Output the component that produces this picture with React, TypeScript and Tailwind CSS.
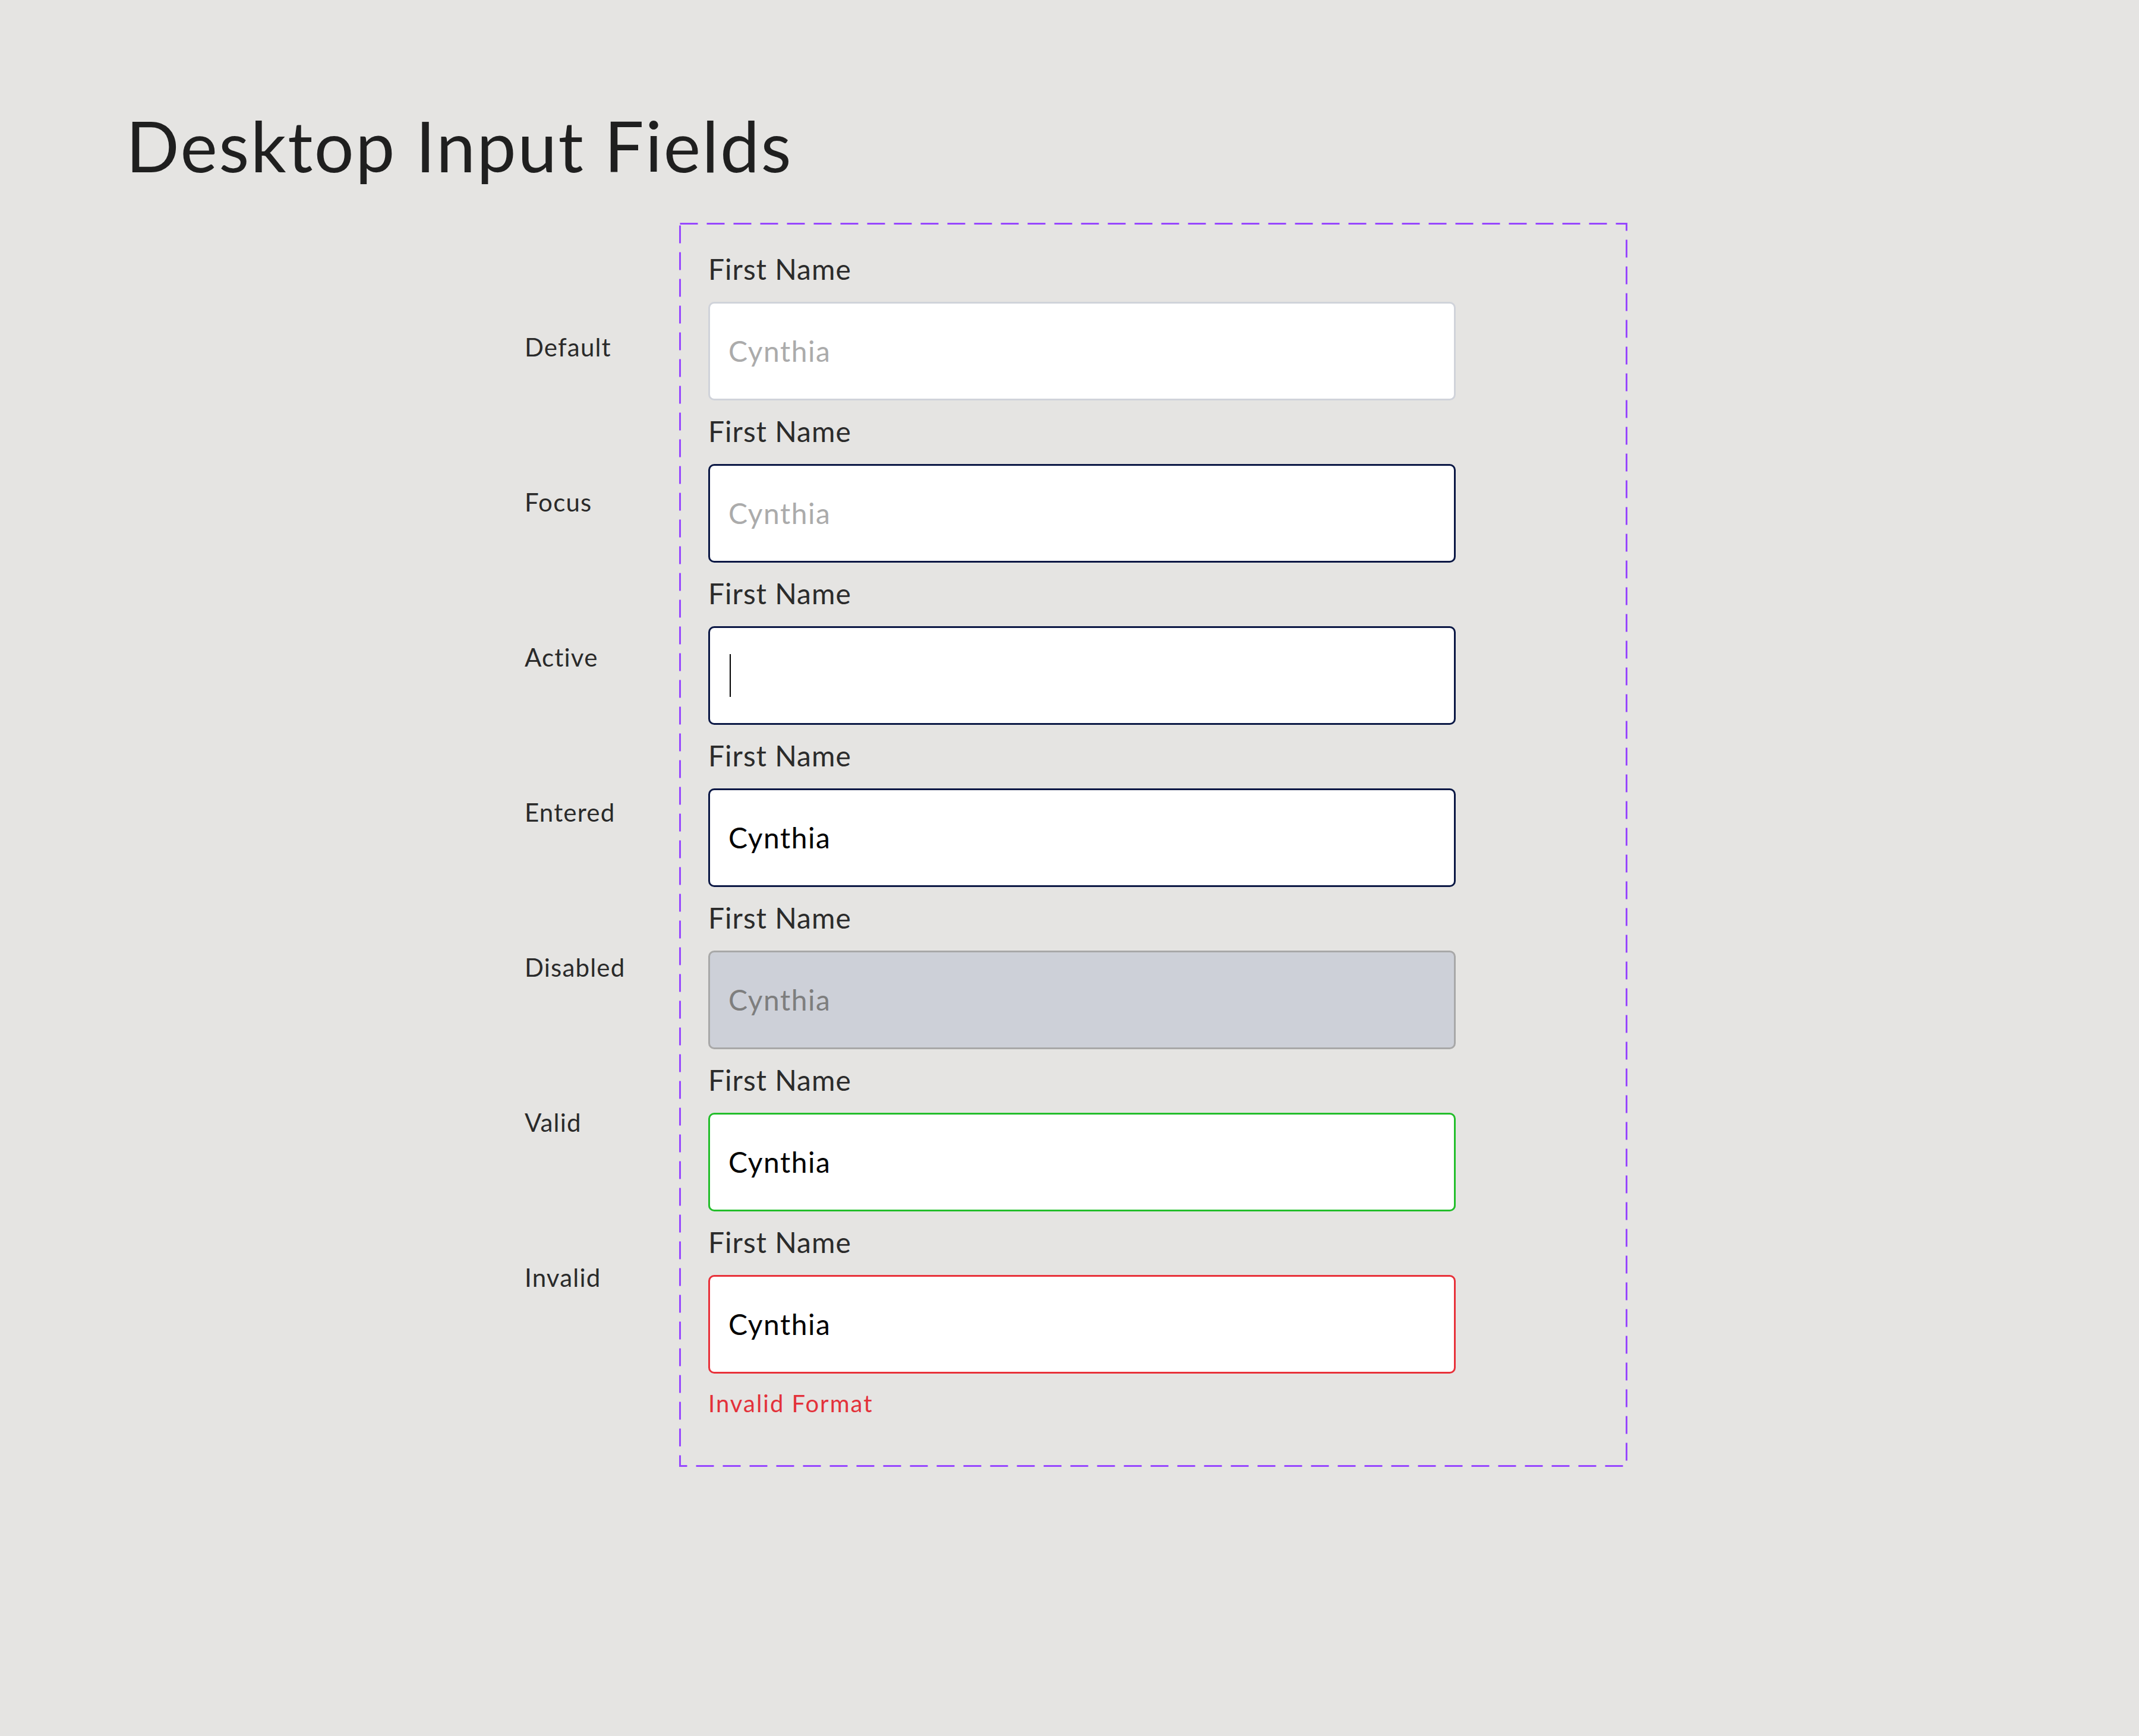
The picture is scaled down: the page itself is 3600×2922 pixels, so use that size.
type FieldState = "default" | "focus" | "active" | "entered" | "disabled" | "valid" | "invalid";

const sideLabels = ["Default", "Focus", "Active", "Entered", "Disabled", "Valid", "Invalid"];

const fields: FieldState[] = ["default", "focus", "active", "entered", "disabled", "valid", "invalid"];

const boxStyles: Record<FieldState, string> = {
  default: "bg-white border-[#D0D3DA]",
  focus: "bg-white border-[#0B1845]",
  active: "bg-white border-[#0B1845]",
  entered: "bg-white border-[#0B1845]",
  disabled: "bg-[#CDD0D8] border-[#A8A8A8]",
  valid: "bg-white border-[#23BE2B]",
  invalid: "bg-white border-[#E8313A]",
};

function InputField({ state }: { state: FieldState }) {
  let content: React.ReactNode = null;
  if (state === "default" || state === "focus") {
    content = <span className="text-[#ABABAB]">Cynthia</span>;
  } else if (state === "disabled") {
    content = <span className="text-[#7E7E7E]">Cynthia</span>;
  } else if (state === "active") {
    content = <span className="ml-[2px] block h-[72px] w-[2px] bg-black" />;
  } else {
    content = <span className="text-black">Cynthia</span>;
  }

  return (
    <div className="flex flex-col">
      <label className="text-[48px] leading-[60px] tracking-[1px] text-[#2B2B2B]">First Name</label>
      <div
        className={`mt-[25px] flex h-[166px] w-[1258px] items-center rounded-[10px] border-[3px] pl-[31px] text-[48px] tracking-[1.5px] ${boxStyles[state]}`}
      >
        {content}
      </div>
      {state === "invalid" && (
        <div className="mt-[26px] text-[40px] leading-[48px] tracking-[2px] text-[#E3313A]">Invalid Format</div>
      )}
    </div>
  );
}

export default function App() {
  return (
    <div
      className="min-h-[2922px] w-[3600px] bg-[#E5E4E2] pl-[212px] pt-[186px]"
      style={{ fontFamily: "Lato, 'Noto Sans', sans-serif" }}
    >
      <h1 className="text-[118px] leading-[118px] font-normal tracking-[2.5px] text-[#1F1F1F]">
        Desktop Input Fields
      </h1>

      <div className="mt-[71px] ml-[671px] flex">
        {/* state names */}
        <div className="mt-[79px] flex w-[260px] flex-col">
          {sideLabels.map((s) => (
            <div key={s} className="h-[261px] text-[42px] leading-[261px] tracking-[1.2px] text-[#2A2A2A]">
              {s}
            </div>
          ))}
        </div>

        {/* component set frame */}
        <div className="relative h-[2094px] w-[1596px] pl-[49px] pt-[48px]">
          <svg className="pointer-events-none absolute inset-0" width="1596" height="2094">
            <rect
              x="1.5"
              y="1.5"
              width="1593"
              height="2091"
              fill="none"
              stroke="#9747FF"
              strokeWidth="3"
              strokeDasharray="30 15"
            />
          </svg>
          <div className="flex flex-col gap-[22px]">
            {fields.map((f) => (
              <InputField key={f} state={f} />
            ))}
          </div>
        </div>
      </div>
    </div>
  );
}
